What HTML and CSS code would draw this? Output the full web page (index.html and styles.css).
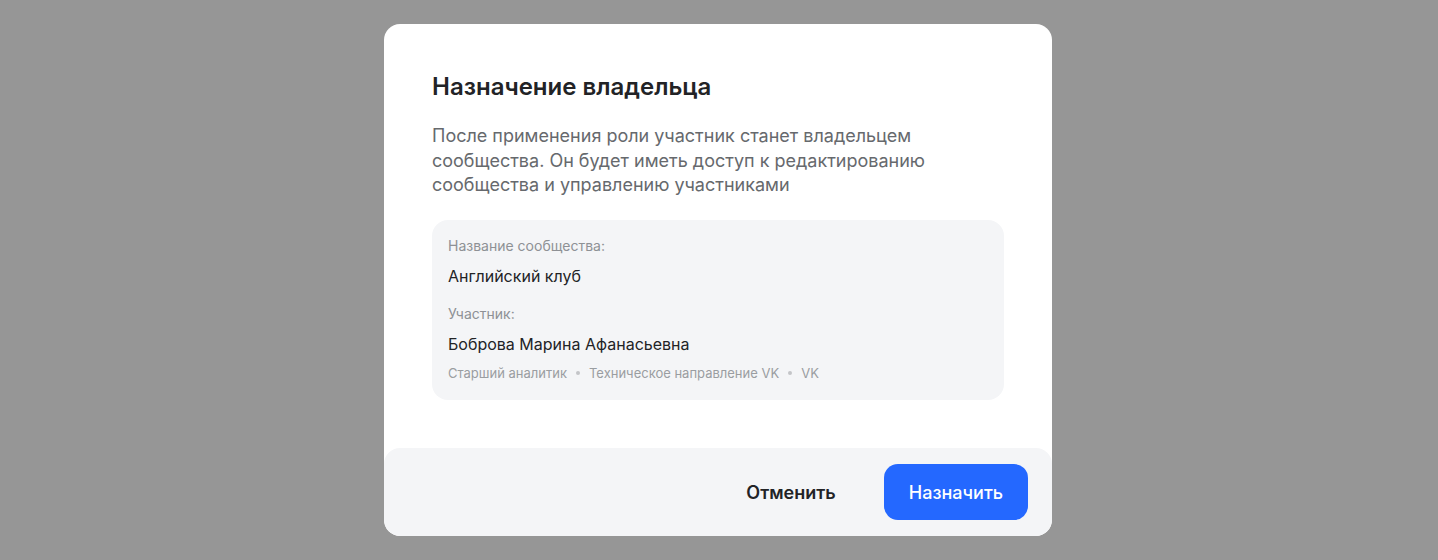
FILE: index.html
```html
<!DOCTYPE html>
<html lang="ru">
<head>
<meta charset="utf-8">
<link rel="stylesheet" href="styles.css">
</head>
<body>
<div class="overlay">
  <div class="modal">
    <div class="modal-body">
      <h2 class="title">Назначение владельца</h2>
      <p class="desc">После применения роли участник станет владельцем сообщества. Он будет иметь доступ к редактированию сообщества и управлению участниками</p>
      <div class="info">
        <div class="label">Название сообщества:</div>
        <div class="value">Английский клуб</div>
        <div class="label second">Участник:</div>
        <div class="value">Боброва Марина Афанасьевна</div>
        <div class="meta"><span>Старший аналитик</span><span class="dot"></span><span>Техническое направление VK</span><span class="dot"></span><span>VK</span></div>
      </div>
    </div>
    <div class="footer">
      <button class="btn btn-cancel">Отменить</button>
      <button class="btn btn-primary">Назначить</button>
    </div>
  </div>
</div>
</body>
</html>
```
FILE: styles.css
```css
* { box-sizing: border-box; }
html, body { margin: 0; padding: 0; }
body {
  background: #969696;
  font-family: Inter, "Noto Sans", sans-serif;
  width: 1438px;
  height: 560px;
  overflow: hidden;
}
.overlay {
  display: flex;
  justify-content: flex-start;
  padding: 24px 0 0 384px;
}
.modal {
  width: 668px;
  background: #fff;
  border-radius: 16px;
  overflow: hidden;
}
.modal-body {
  padding: 48px 48px 48px;
}
.title {
  margin: 0;
  font-size: 24px;
  line-height: 30px;
  font-weight: 600;
  color: #222326;
}
.desc {
  margin: 22px 0 0;
  font-size: 18px;
  line-height: 24.5px;
  color: #66696d;
  width: 550px;
}
.info {
  margin-top: 22.5px;
  background: #f4f5f7;
  border-radius: 16px;
  padding: 16px 16px 18px;
}
.label {
  font-size: 14px;
  line-height: 20px;
  color: #8e9195;
}
.label.second { margin-top: 16px; }
.value {
  margin-top: 8px;
  font-size: 16px;
  line-height: 24px;
  color: #222326;
}
.meta {
  margin-top: 8px;
  display: flex;
  align-items: center;
  gap: 9px;
  font-size: 13px;
  line-height: 18px;
  color: #9a9da1;
}
.dot {
  width: 4px;
  height: 4px;
  border-radius: 50%;
  background: #c3c5c8;
}
.footer {
  background: #f4f5f7;
  border-radius: 16px;
  padding: 16px 24px;
  display: flex;
  justify-content: flex-end;
  gap: 24px;
}
.btn {
  height: 56px;
  border: none;
  border-radius: 14px;
  padding: 0 24px;
  font-family: Inter, "Noto Sans", sans-serif;
  font-size: 18px;
  font-weight: 600;
  cursor: pointer;
}
.btn-cancel {
  background: transparent;
  color: #222326;
}
.btn-primary {
  background: #2468ff;
  color: #fff;
  font-weight: 500;
  padding: 0 25px;
}
```
